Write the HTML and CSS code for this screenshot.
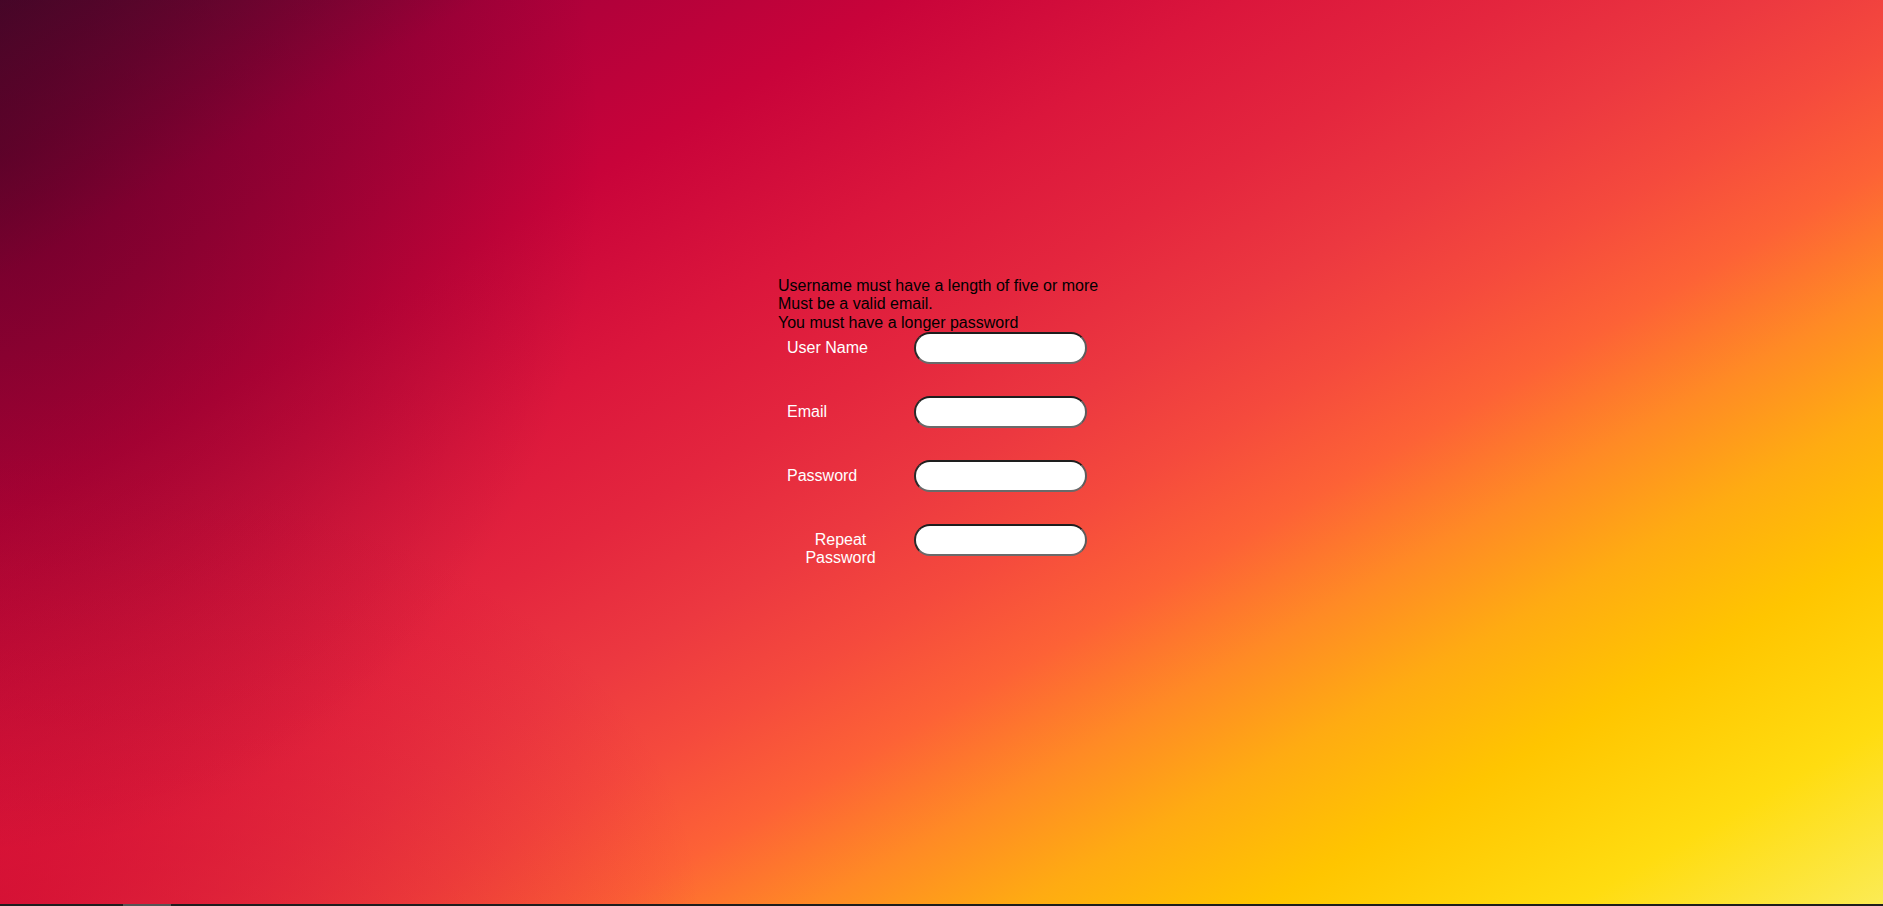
FILE: index.html
```html
<!DOCTYPE html>
<html lang="en">
<head>
<meta charset="utf-8">
<title>Register</title>
<link rel="stylesheet" href="styles.css">
</head>
<body>
<div class="page">
  <main class="stage">
    <form class="register">
      <div class="errors">
        <div>Username must have a length of five or more</div>
        <div>Must be a valid email.</div>
        <div>You must have a longer password</div>
      </div>
      <div class="row">
        <div class="label-cell"><label class="label" for="u">User Name</label></div>
        <input class="field" id="u" type="text">
      </div>
      <div class="row">
        <div class="label-cell"><label class="label" for="e">Email</label></div>
        <input class="field" id="e" type="text">
      </div>
      <div class="row">
        <div class="label-cell"><label class="label" for="p">Password</label></div>
        <input class="field" id="p" type="password">
      </div>
      <div class="row">
        <div class="label-cell"><label class="label" for="r">Repeat Password</label></div>
        <input class="field" id="r" type="password">
      </div>
    </form>
  </main>
  <div class="hbar"><div class="hbar-thumb"></div></div>
</div>
</body>
</html>
```
FILE: styles.css
```css
html, body {
  margin: 0;
  height: 100%;
}
body {
  font-family: "Liberation Sans", Arial, sans-serif;
  font-size: 16px;
  overflow: hidden;
}
.page {
  height: 100vh;
  display: flex;
  flex-direction: column;
  background:
    radial-gradient(ellipse 600px 700px at 0 150px, rgba(60, 0, 30, 0.5), rgba(60, 0, 30, 0) 100%),
    radial-gradient(ellipse 700px 450px at 0 906px, rgba(205, 5, 48, 0.65), rgba(205, 5, 48, 0) 100%),
    linear-gradient(150deg,
      #4c0a2e 0%,
      #a8003a 14%,
      #c8033a 26%,
      #db163c 36%,
      #e4263e 44%,
      #ec3840 51%,
      #f54a3d 57%,
      #fd6236 63%,
      #ff8a25 69%,
      #ffab12 75%,
      #ffc500 82%,
      #ffdc10 91%,
      #fbeb55 100%);
}
.stage {
  flex: 1;
  display: flex;
  justify-content: center;
  padding-top: 277px;
}
.register {
  width: 327px;
}
.errors {
  color: #000;
  line-height: 18.4px;
}
.row {
  display: flex;
  align-items: baseline;
  padding-left: 9px;
  margin-bottom: 32px;
}
.label-cell {
  flex: none;
  width: 127px;
}
.label {
  display: block;
  width: fit-content;
  max-width: 107px;
  text-align: center;
  color: #fff;
  line-height: 18.4px;
}
.field {
  box-sizing: border-box;
  width: 173px;
  height: 32px;
  margin: 0;
  padding: 1px 12px;
  font: 13.333px "Liberation Sans", Arial, sans-serif;
  background: #fff;
  border: 2px solid;
  border-color: #1e1e1e #5c5c5c #6a6a6a #2a2a2a;
  border-radius: 16px;
  outline: none;
}
.hbar {
  flex: none;
  height: 2px;
  background: #1e1e1e;
  position: relative;
}
.hbar-thumb {
  position: absolute;
  left: 123px;
  top: 0;
  width: 48px;
  height: 2px;
  background: #555;
}
```
